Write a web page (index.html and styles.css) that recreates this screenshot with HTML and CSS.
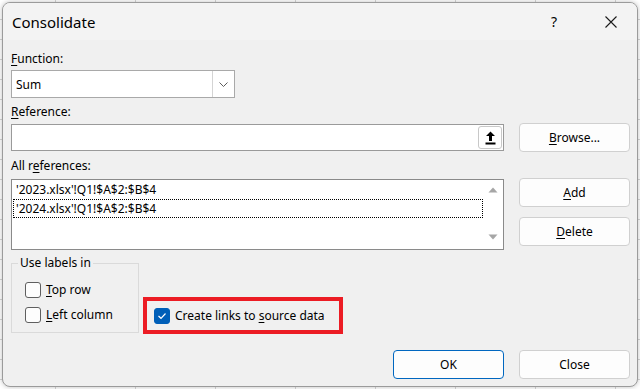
FILE: index.html
```html
<!DOCTYPE html>
<html lang="en">
<head>
    <meta charset="UTF-8">
    <meta name="viewport" content="width=device-width, initial-scale=1.0">
    <title>Consolidate</title>
    <link rel="stylesheet" href="styles.css">
</head>
<body>

    <div class="dialog">
        <div class="titlebar">
            <span class="title">Consolidate</span>
            <span class="help">?</span>
            <span class="close">
                <svg width="12" height="12" viewBox="0 0 12 12">
                    <path d="M0.5 0.5 L11.5 11.5 M11.5 0.5 L0.5 11.5" stroke="#1a1a1a" stroke-width="1.1" fill="none"/>
                </svg>
            </span>
        </div>

        <div class="content">
            <div class="lbl"><u>F</u>unction:</div>
            <div class="select">
                <span class="select-value">Sum</span>
                <span class="select-arrow">
                    <svg width="9" height="5" viewBox="0 0 9 5">
                        <path d="M0.5 0.5 L4.5 4.5 L8.5 0.5" stroke="#5c5c5c" stroke-width="1" fill="none"/>
                    </svg>
                </span>
            </div>

            <div class="lbl lbl-ref"><u>R</u>eference:</div>
            <div class="row">
                <div class="refbox">
                    <span class="collapse">
                        <svg width="11" height="14" viewBox="0 0 11 14">
                            <path d="M5.5 0.5 L10 5 L7 5 L7 10 L4 10 L4 5 L1 5 Z" fill="#000"/>
                            <rect x="0.5" y="11.5" width="10" height="2" fill="#000"/>
                        </svg>
                    </span>
                </div>
                <button class="btn"><u>B</u>rowse...</button>
            </div>

            <div class="lbl lbl-ref">All r<u>e</u>ferences:</div>
            <div class="row row-list">
                <div class="listbox">
                    <ul class="items">
                        <li>'2023.xlsx'!Q1!$A$2:$B$4</li>
                        <li class="focused">'2024.xlsx'!Q1!$A$2:$B$4</li>
                    </ul>
                    <div class="scrollbar">
                        <svg width="10" height="6" viewBox="0 0 10 6"><path d="M5 0.5 L9.5 5.5 L0.5 5.5 Z" fill="#a6a6a6"/></svg>
                        <svg width="10" height="6" viewBox="0 0 10 6"><path d="M0.5 0.5 L9.5 0.5 L5 5.5 Z" fill="#a6a6a6"/></svg>
                    </div>
                </div>
                <div class="side">
                    <button class="btn"><u>A</u>dd</button>
                    <button class="btn"><u>D</u>elete</button>
                </div>
            </div>

            <div class="options">
                <fieldset class="group">
                    <legend>Use labels in</legend>
                    <div class="check"><span class="box"></span><span><u>T</u>op row</span></div>
                    <div class="check"><span class="box"></span><span><u>L</u>eft column</span></div>
                </fieldset>
                <div class="highlight">
                    <div class="check">
                        <span class="box checked">
                            <svg width="10" height="8" viewBox="0 0 10 8">
                                <path d="M1.5 4 L4 6.3 L8.5 1.5" stroke="#fff" stroke-width="1.2" fill="none"/>
                            </svg>
                        </span>
                        <span>Create links to <u>s</u>ource data</span>
                    </div>
                </div>
            </div>

            <div class="footer">
                <button class="btn primary">OK</button>
                <button class="btn">Close</button>
            </div>
        </div>
    </div>

</body>
</html>
```

FILE: styles.css
```css
html, body {
    margin: 0;
    height: 389px;
    overflow: hidden;
}
body {
    font-family: "Noto Sans", "Open Sans", sans-serif;
    font-size: 12px;
    color: #000;
    background-color: #fff;
    background-image:
        linear-gradient(to right, transparent 55px, #d6d6d6 55px, #d6d6d6 56px, transparent 56px),
        linear-gradient(to bottom, transparent 19px, #d6d6d6 19px, #d6d6d6 20px, transparent 20px);
    background-size: 80px 389px, 640px 20px;
    padding: 2px 0 0 2px;
    box-sizing: border-box;
}
.dialog {
    width: 636px;
    height: 385px;
    box-sizing: border-box;
    border: 1px solid #9b9b9b;
    border-radius: 8px;
    background: #f0f0f0;
    box-shadow: 0 0 5px rgba(0, 0, 0, 0.25);
    overflow: hidden;
}
.titlebar {
    height: 37px;
    background: #f3f3f3;
    display: flex;
    align-items: center;
    padding-left: 9px;
}
.title {
    flex: 1;
    font-size: 15px;
    line-height: 20px;
}
.help {
    width: 46px;
    text-align: center;
    font-size: 14px;
    margin-right: 11px;
}
.close {
    width: 46px;
    display: flex;
    justify-content: center;
    margin-right: 3px;
}
.content {
    padding: 11px 7px 0 8px;
}
.lbl {
    line-height: 16px;
}
.lbl-ref {
    margin-top: 6px;
}
u {
    text-underline-offset: 2px;
}
.select {
    margin-top: 3px;
    width: 224px;
    height: 28px;
    box-sizing: border-box;
    border: 1px solid #a9a9a9;
    background: #fff;
    display: flex;
    align-items: center;
}
.select-value {
    flex: 1;
    padding-left: 4px;
}
.select-arrow {
    width: 21px;
    height: 26px;
    border-left: 1px solid #d4d4d4;
    display: flex;
    align-items: center;
    justify-content: center;
}
.row {
    display: grid;
    grid-template-columns: 493px 111px;
    gap: 15px;
    align-items: center;
    margin-top: 3px;
}
.row-list {
    align-items: start;
    margin-top: 4px;
}
.refbox {
    height: 27px;
    box-sizing: border-box;
    border: 1px solid #9a9a9a;
    background: #fff;
    display: flex;
    justify-content: flex-end;
    align-items: center;
    padding-right: 1px;
}
.collapse {
    width: 24px;
    height: 23px;
    box-sizing: border-box;
    border: 1px solid #c8c8c8;
    border-radius: 3px;
    background: #fff;
    display: flex;
    align-items: center;
    justify-content: center;
}
.btn {
    height: 29px;
    box-sizing: border-box;
    border: 1px solid #d0d0d0;
    border-radius: 4px;
    background: #fdfdfd;
    font-family: inherit;
    font-size: 12px;
    color: #000;
    padding: 0;
}
.btn.primary {
    border-color: #0067c0;
}
.listbox {
    margin-top: 1px;
    height: 71px;
    box-sizing: border-box;
    border: 1px solid #8a8a8a;
    background: #fff;
    display: flex;
}
.items {
    list-style: none;
    margin: 0;
    padding: 0 0 0 1px;
    flex: 1;
}
.items li {
    height: 17px;
    line-height: 17px;
    padding-left: 2px;
    border: 1px dotted transparent;
}
.items li.focused {
    border-color: #000;
}
.scrollbar {
    width: 20px;
    display: flex;
    flex-direction: column;
    justify-content: space-between;
    align-items: center;
    padding: 7px 0 9px;
}
.side {
    display: flex;
    flex-direction: column;
    gap: 10px;
}
.options {
    display: flex;
    align-items: flex-end;
    gap: 4px;
    margin-top: 5px;
}
.group {
    width: 128px;
    box-sizing: border-box;
    margin: 0;
    border: 1px solid #dadada;
    padding: 11px 0 9px 6px;
    display: flex;
    flex-direction: column;
    gap: 9px;
}
.group legend {
    padding: 0 2px;
    line-height: 16px;
}
.group .check {
    margin-left: 7px;
}
.check {
    display: flex;
    align-items: center;
    gap: 5px;
    line-height: 16px;
    white-space: nowrap;
}
.box {
    width: 16px;
    height: 16px;
    box-sizing: border-box;
    border: 1px solid #5f5f5f;
    border-radius: 3px;
    background: #fdfdfd;
    display: flex;
    align-items: center;
    justify-content: center;
}
.box.checked {
    background: #005fb8;
    border-color: #005fb8;
}
.highlight {
    width: 200px;
    height: 37px;
    box-sizing: border-box;
    border: 4px solid #ec1c24;
    padding-left: 7px;
    display: flex;
    align-items: center;
    margin-bottom: -1px;
}
.footer {
    display: flex;
    justify-content: flex-end;
    gap: 15px;
    margin-top: 17px;
}
.footer .btn {
    width: 111px;
}
```
